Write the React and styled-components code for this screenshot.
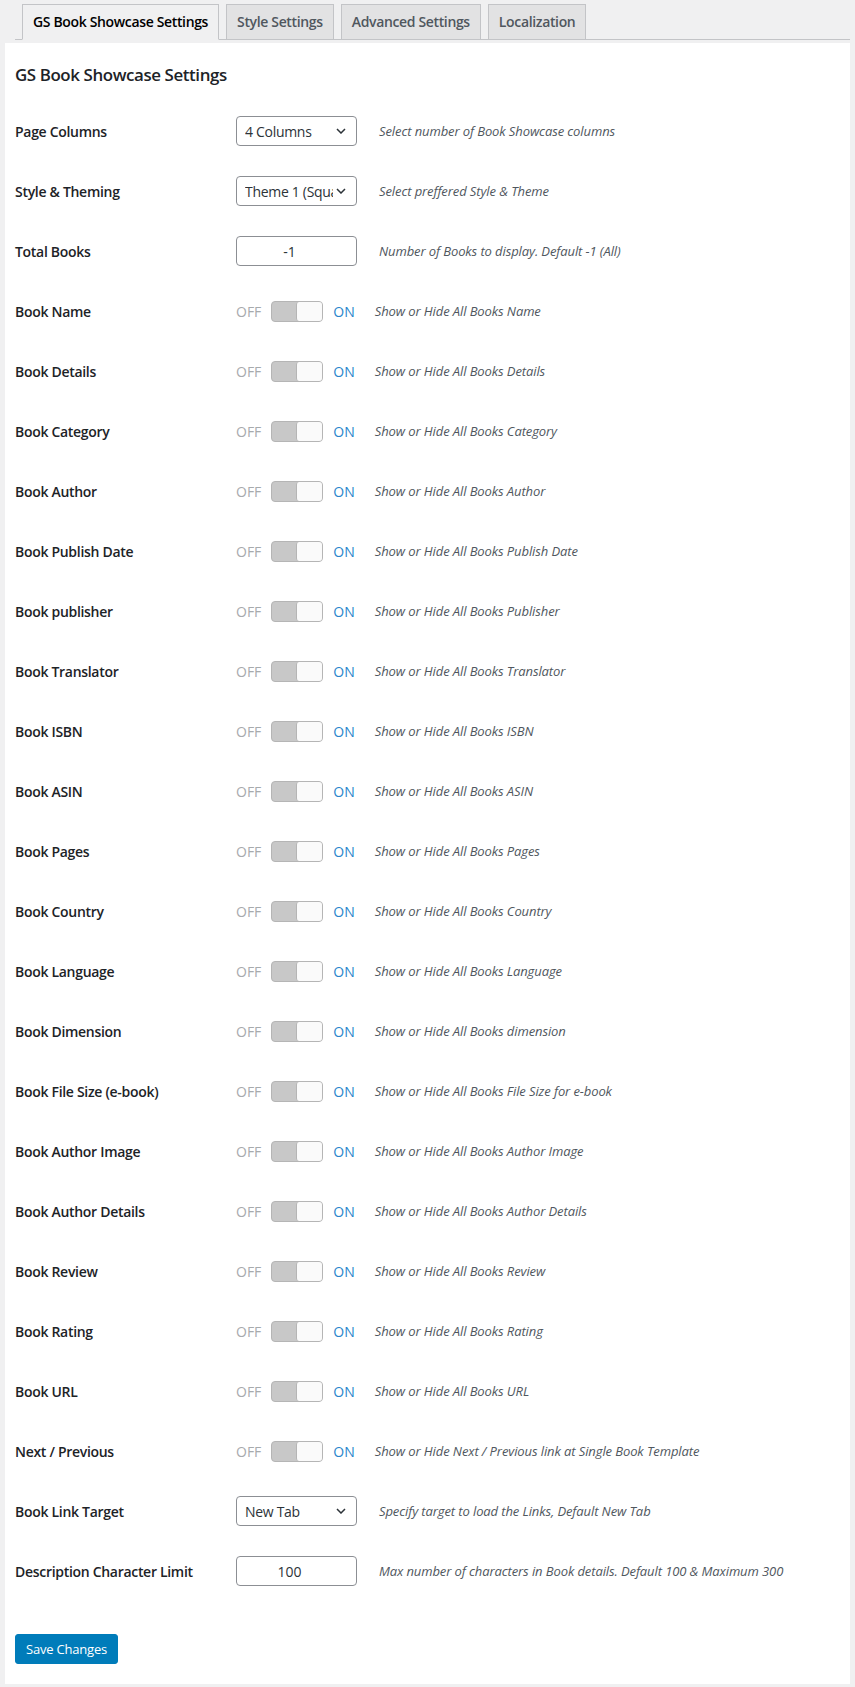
import styled, { createGlobalStyle } from 'styled-components';

const GlobalStyle = createGlobalStyle`
  html, body {
    margin: 0;
    padding: 0;
    background: #f0f0f1;
  }
  body {
    font-family: "Open Sans", "Noto Sans", sans-serif;
    color: #1d2327;
  }
`;

const rows = [
  { label: 'Page Columns', type: 'select', value: '4 Columns', desc: 'Select number of Book Showcase columns' },
  { label: 'Style & Theming', type: 'select', value: 'Theme 1 (Square)', desc: 'Select preffered Style & Theme' },
  { label: 'Total Books', type: 'input', value: '-1', desc: 'Number of Books to display. Default -1 (All)' },
  { label: 'Book Name', type: 'toggle', desc: 'Show or Hide All Books Name' },
  { label: 'Book Details', type: 'toggle', desc: 'Show or Hide All Books Details' },
  { label: 'Book Category', type: 'toggle', desc: 'Show or Hide All Books Category' },
  { label: 'Book Author', type: 'toggle', desc: 'Show or Hide All Books Author' },
  { label: 'Book Publish Date', type: 'toggle', desc: 'Show or Hide All Books Publish Date' },
  { label: 'Book publisher', type: 'toggle', desc: 'Show or Hide All Books Publisher' },
  { label: 'Book Translator', type: 'toggle', desc: 'Show or Hide All Books Translator' },
  { label: 'Book ISBN', type: 'toggle', desc: 'Show or Hide All Books ISBN' },
  { label: 'Book ASIN', type: 'toggle', desc: 'Show or Hide All Books ASIN' },
  { label: 'Book Pages', type: 'toggle', desc: 'Show or Hide All Books Pages' },
  { label: 'Book Country', type: 'toggle', desc: 'Show or Hide All Books Country' },
  { label: 'Book Language', type: 'toggle', desc: 'Show or Hide All Books Language' },
  { label: 'Book Dimension', type: 'toggle', desc: 'Show or Hide All Books dimension' },
  { label: 'Book File Size (e-book)', type: 'toggle', desc: 'Show or Hide All Books File Size for e-book' },
  { label: 'Book Author Image', type: 'toggle', desc: 'Show or Hide All Books Author Image' },
  { label: 'Book Author Details', type: 'toggle', desc: 'Show or Hide All Books Author Details' },
  { label: 'Book Review', type: 'toggle', desc: 'Show or Hide All Books Review' },
  { label: 'Book Rating', type: 'toggle', desc: 'Show or Hide All Books Rating' },
  { label: 'Book URL', type: 'toggle', desc: 'Show or Hide All Books URL' },
  { label: 'Next / Previous', type: 'toggle', desc: 'Show or Hide Next / Previous link at Single Book Template' },
  { label: 'Book Link Target', type: 'select', value: 'New Tab', desc: 'Specify target to load the Links, Default New Tab' },
  { label: 'Description Character Limit', type: 'input', value: '100', desc: 'Max number of characters in Book details. Default 100 & Maximum 300' },
];

const tabs = ['GS Book Showcase Settings', 'Style Settings', 'Advanced Settings', 'Localization'];

function Chevron() {
  return (
    <svg width="10" height="6" viewBox="0 0 10 6">
      <path d="M1 1l4 4 4-4" fill="none" stroke="#2c3338" strokeWidth="1.5" />
    </svg>
  );
}

function Control({ row }) {
  if (row.type === 'select') {
    return (
      <SelectBox>
        <SelectText>{row.value}</SelectText>
        <Chevron />
      </SelectBox>
    );
  }
  if (row.type === 'input') {
    return <NumberBox>{row.value}</NumberBox>;
  }
  return (
    <ToggleGroup>
      <Off>OFF</Off>
      <Track>
        <Knob />
      </Track>
      <On>ON</On>
    </ToggleGroup>
  );
}

export default function App() {
  return (
    <>
      <GlobalStyle />
      <Page>
        <TabBar>
          {tabs.map((t, i) => (
            <Tab key={t} active={i === 0}>
              {t}
            </Tab>
          ))}
        </TabBar>
        <Panel>
          <Heading>GS Book Showcase Settings</Heading>
          {rows.map((row) => (
            <Row key={row.label}>
              <Label>{row.label}</Label>
              <Field>
                <Control row={row} />
                <Desc toggle={row.type === 'toggle'}>{row.desc}</Desc>
              </Field>
            </Row>
          ))}
          <SaveButton>Save Changes</SaveButton>
        </Panel>
      </Page>
    </>
  );
}

const Page = styled.div`
  padding: 4px 5px 5px 5px;
`;

const TabBar = styled.div`
  display: flex;
  margin-left: 10px;
  border-bottom: 1px solid #c3c4c7;
`;

const Tab = styled.div`
  margin-left: 7px;
  margin-bottom: -1px;
  padding: 5px 10px;
  font-size: 14px;
  line-height: 24px;
  font-weight: 600;
  letter-spacing: -0.35px;
  border: 1px solid #c3c4c7;
  border-bottom-color: ${(p) => (p.active ? '#f0f0f1' : '#c3c4c7')};
  background: ${(p) => (p.active ? '#f0f0f1' : '#e2e2e3')};
  color: ${(p) => (p.active ? '#000' : '#50575e')};
  white-space: nowrap;
`;

const Panel = styled.div`
  margin-top: 3px;
  background: #fff;
  padding: 21px 10px 20px 10px;
`;

const Heading = styled.h2`
  margin: 0 0 15px 0;
  font-size: 16.9px;
  line-height: 22px;
  font-weight: 600;
  letter-spacing: -0.4px;
  color: #1d2327;
`;

const Row = styled.div`
  display: flex;
  align-items: center;
  height: 60px;
`;

const Label = styled.div`
  width: 221px;
  flex: none;
  font-size: 14px;
  font-weight: 600;
  letter-spacing: -0.3px;
  color: #1d2327;
`;

const Field = styled.div`
  display: flex;
  align-items: center;
`;

const SelectBox = styled.div`
  box-sizing: border-box;
  width: 121px;
  height: 30px;
  border: 1px solid #8c8f94;
  border-radius: 4px;
  display: flex;
  align-items: center;
  padding: 0 10px 0 8px;
  gap: 3px;
  font-size: 14px;
  letter-spacing: -0.3px;
  color: #2c3338;
`;

const SelectText = styled.span`
  flex: 1;
  overflow: hidden;
  white-space: nowrap;
`;

const NumberBox = styled.div`
  box-sizing: border-box;
  width: 121px;
  height: 30px;
  padding-right: 14px;
  border: 1px solid #8c8f94;
  border-radius: 4px;
  display: flex;
  align-items: center;
  justify-content: center;
  font-size: 14px;
  color: #2c3338;
`;

const ToggleGroup = styled.div`
  display: flex;
  align-items: center;
  gap: 10px;
  font-size: 14px;
`;

const Off = styled.span`
  color: #a7aaad;
`;

const On = styled.span`
  color: #2a86cc;
`;

const Track = styled.div`
  box-sizing: border-box;
  width: 52px;
  height: 21px;
  background: #c8c8c8;
  border: 1px solid #b5b5b5;
  border-radius: 4px;
  display: flex;
  justify-content: flex-end;
`;

const Knob = styled.div`
  width: 25px;
  height: 100%;
  background: #fafafa;
  border-left: 1px solid #b5b5b5;
  border-radius: 3px;
`;

const Desc = styled.span`
  margin-left: ${(p) => (p.toggle ? '20px' : '22px')};
  font-size: 13px;
  font-style: italic;
  letter-spacing: -0.1px;
  color: #50575e;
  white-space: nowrap;
`;

const SaveButton = styled.button`
  margin-top: 33px;
  height: 30px;
  padding: 0 10px;
  background: #007cba;
  border: 1px solid #007cba;
  border-radius: 3px;
  color: #fff;
  font-family: inherit;
  font-size: 13px;
  letter-spacing: -0.2px;
`;
